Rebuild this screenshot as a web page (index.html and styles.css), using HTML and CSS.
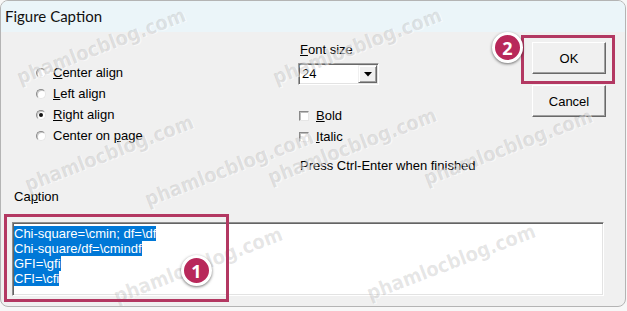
FILE: index.html
```html
<!DOCTYPE html>
<html>
<head>
<meta charset="utf-8">
<link rel="stylesheet" href="styles.css">
</head>
<body>
<div class="window">
  <div class="titlebar">Figure Caption</div>
  <div class="client">
    <div class="top">
      <div class="radios">
        <div class="opt"><span class="radio"></span><span><u>C</u>enter align</span></div>
        <div class="opt"><span class="radio"></span><span><u>L</u>eft align</span></div>
        <div class="opt"><span class="radio on"></span><span><u>R</u>ight align</span></div>
        <div class="opt"><span class="radio"></span><span>Center on <u>p</u>age</span></div>
      </div>
      <div class="fontcol">
        <div class="label"><u>F</u>ont size</div>
        <div class="combo">
          <span class="val">24</span>
          <span class="dropbtn"><svg width="8" height="5" viewBox="0 0 8 5"><path d="M0 0H8L4 4.5Z" fill="#000"/></svg></span>
        </div>
        <div class="checks">
          <div class="opt"><span class="check"></span><span><u>B</u>old</span></div>
          <div class="opt"><span class="check"></span><span><u>I</u>talic</span></div>
        </div>
        <div class="hint">Press Ctrl-Enter when finished</div>
      </div>
      <div class="buttons">
        <div class="btn">OK</div>
        <div class="btn cancel">Cancel</div>
      </div>
    </div>
    <div class="caption-label">Ca<u>p</u>tion</div>
    <div class="textbox">
      <div class="sel">Chi-square=\cmin; df=\df</div>
      <div class="sel">Chi-square/df=\cmindf</div>
      <div class="sel">GFI=\gfi</div>
      <div class="sel">CFI=\cfi</div>
    </div>
  </div>

  <span class="wm w1">phamlocblog.com</span>
  <span class="wm w2">phamlocblog.com</span>
  <span class="wm w3">phamlocblog.com</span>
  <span class="wm w4">phamlocblog.com</span>
  <span class="wm w5">phamlocblog.com</span>
  <span class="wm w6">phamlocblog.com</span>
  <span class="wm w7">phamlocblog.com</span>
  <span class="wm w8">phamlocblog.com</span>

  <div class="hl hl-text"></div>
  <div class="hl hl-ok"></div>
  <div class="badge b1">1</div>
  <div class="badge b2">2</div>
</div>
</body>
</html>
```

FILE: styles.css
```css
html, body {
  margin: 0;
  padding: 0;
  background: #f7f7f7;
}

.window {
  position: relative;
  width: 626px;
  height: 307px;
  box-sizing: border-box;
  border: 1px solid #b4b4b4;
  border-radius: 8px;
  overflow: hidden;
  background: #f0f0f0;
  font-family: "Liberation Sans", Arial, sans-serif;
  font-size: 13px;
  color: #000;
}

.titlebar {
  height: 31px;
  line-height: 31px;
  padding-left: 4px;
  background: #ebf5f9;
  font-family: Lato, "Noto Sans", sans-serif;
  font-size: 15px;
  color: #111;
}

.top {
  display: flex;
  height: 150px;
}

.radios {
  width: 262px;
  padding-left: 35px;
  padding-top: 30px;
}

.opt {
  display: flex;
  align-items: center;
  height: 21px;
}

.radio {
  position: relative;
  width: 10px;
  height: 10px;
  box-sizing: border-box;
  border-radius: 50%;
  border: 1px solid;
  border-color: #8a8a8a #e6e6e6 #e6e6e6 #8a8a8a;
  background: #fff;
  margin-right: 7px;
  box-shadow: inset 1px 1px 0 #c8c8c8;
}

.radio.on::after {
  content: "";
  position: absolute;
  left: 2px;
  top: 2px;
  width: 4px;
  height: 4px;
  border-radius: 50%;
  background: #111;
}

.fontcol {
  width: 234px;
  padding-top: 10px;
}

.label {
  line-height: 16px;
  padding-left: 2px;
}

.combo {
  margin-top: 5px;
  width: 81px;
  height: 22px;
  box-sizing: border-box;
  border: 1px solid;
  border-color: #a0a0a0 #fff #fff #a0a0a0;
  box-shadow: inset 1px 1px 0 #696969, inset -1px -1px 0 #e3e3e3;
  background: #fff;
  display: flex;
  align-items: center;
  justify-content: space-between;
  padding: 1px 1px 1px 3px;
}

.val {
  line-height: 16px;
}

.dropbtn {
  width: 19px;
  height: 18px;
  box-sizing: border-box;
  background: #f0f0f0;
  border: 1px solid;
  border-color: #f0f0f0 #696969 #696969 #f0f0f0;
  box-shadow: inset 1px 1px 0 #fff, inset -1px -1px 0 #a0a0a0;
  display: flex;
  align-items: center;
  justify-content: center;
}

.checks {
  margin-top: 20px;
  padding-left: 1px;
}

.check {
  width: 10px;
  height: 10px;
  box-sizing: border-box;
  border: 1px solid;
  border-color: #8a8a8a #e6e6e6 #e6e6e6 #8a8a8a;
  box-shadow: inset 1px 1px 0 #bdbdbd;
  background: #fff;
  margin-right: 7px;
}

.hint {
  margin-top: 11px;
  line-height: 16px;
  padding-left: 2px;
}

.buttons {
  padding-top: 10px;
  display: flex;
  flex-direction: column;
  gap: 11px;
}

.btn {
  width: 74px;
  height: 32px;
  box-sizing: border-box;
  border: 1px solid;
  border-color: #fff #696969 #696969 #fff;
  box-shadow: inset -1px -1px 0 #a0a0a0;
  background: #f0f0f0;
  display: flex;
  align-items: center;
  justify-content: center;
  font-size: 13px;
}

.caption-label {
  margin-top: 7px;
  margin-left: 13px;
  line-height: 16px;
}

.textbox {
  margin-top: 17px;
  margin-left: 11px;
  width: 592px;
  height: 74px;
  box-sizing: border-box;
  border: 1px solid;
  border-color: #8f8f8f #fff #fff #8f8f8f;
  box-shadow: inset 1px 1px 0 #646464, inset -1px -1px 0 #e3e3e3;
  background: #fff;
  padding: 3px 0 0 1px;
}

.sel {
  width: fit-content;
  background: #0078d7;
  color: #fff;
  line-height: 15px;
  height: 15px;
}

.wm {
  position: absolute;
  font-family: "DejaVu Sans Condensed", "DejaVu Sans", sans-serif;
  font-weight: bold;
  font-size: 20px;
  color: rgba(60, 60, 60, 0.13);
  text-shadow: 1px 1px 0 rgba(255, 255, 255, 0.5);
  white-space: nowrap;
  transform: translate(-50%, -50%) rotate(-21deg);
  pointer-events: none;
}

.w1 { left: 100px; top: 45px; }
.w2 { left: 108px; top: 152px; }
.w3 { left: 356px; top: 45px; }
.w4 { left: 351px; top: 145px; }
.w5 { left: 507px; top: 146px; }
.w6 { left: 197px; top: 264px; }
.w7 { left: 450px; top: 261px; }
.w8 { left: 228px; top: 167px; }

.hl {
  position: absolute;
  box-sizing: border-box;
  border: 3px solid #b33862;
}

.hl-text {
  left: 3px;
  top: 213px;
  width: 225px;
  height: 88px;
}

.hl-ok {
  left: 520px;
  top: 34px;
  width: 94px;
  height: 49px;
}

.badge {
  position: absolute;
  width: 31px;
  height: 31px;
  box-sizing: border-box;
  border-radius: 50%;
  border: 3px solid #fff;
  background: #b8285a;
  box-shadow: 0 1px 3px rgba(0, 0, 0, 0.55);
  color: #fff;
  font-family: "Open Sans", "DejaVu Sans", sans-serif;
  font-weight: bold;
  font-size: 18px;
  display: flex;
  align-items: center;
  justify-content: center;
}

.b1 { left: 180px; top: 254px; }
.b2 { left: 491px; top: 31px; }
```
